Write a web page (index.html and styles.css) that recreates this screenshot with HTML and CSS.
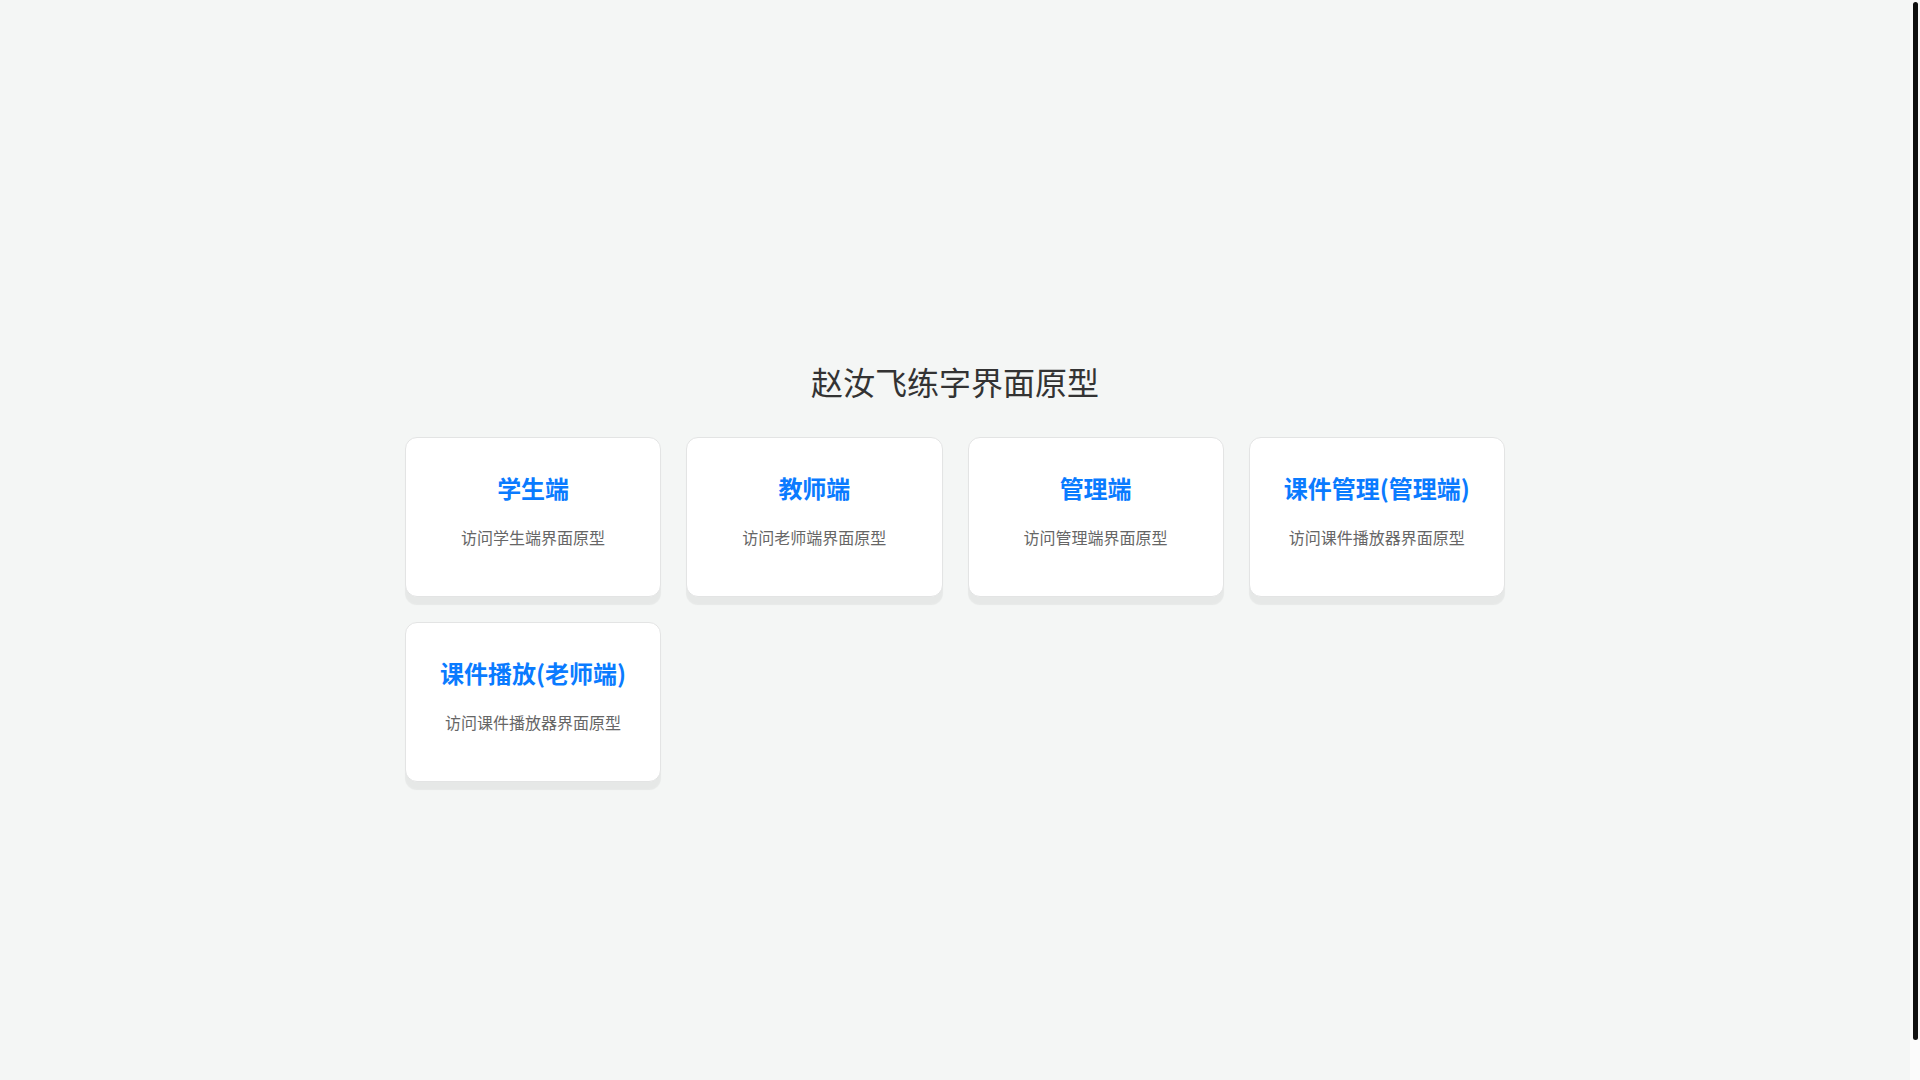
FILE: index.html
```html
<!DOCTYPE html>
<html lang="zh-CN">
<head>
<meta charset="utf-8">
<title>赵汝飞练字界面原型</title>
<link rel="stylesheet" href="styles.css">
</head>
<body>
<main class="page">
  <h1 class="page-title">赵汝飞练字界面原型</h1>
  <div class="card-grid">
    <a class="card" href="#"><h2 class="card-title">学生端</h2><p class="card-desc">访问学生端界面原型</p></a>
    <a class="card" href="#"><h2 class="card-title">教师端</h2><p class="card-desc">访问老师端界面原型</p></a>
    <a class="card" href="#"><h2 class="card-title">管理端</h2><p class="card-desc">访问管理端界面原型</p></a>
    <a class="card" href="#"><h2 class="card-title">课件管理(管理端)</h2><p class="card-desc">访问课件播放器界面原型</p></a>
    <a class="card" href="#"><h2 class="card-title">课件播放(老师端)</h2><p class="card-desc">访问课件播放器界面原型</p></a>
  </div>
</main>
<div class="scrollbar" aria-hidden="true"><div class="scrollbar-thumb"></div></div>
</body>
</html>
```
FILE: styles.css
```css
html, body {
  margin: 0;
  padding: 0;
}

html {
  overflow: hidden;
}

body {
  background: #f4f6f5;
  font-family: "Noto Sans CJK SC", "Noto Sans", sans-serif;
  color: #333333;
  padding-right: 10px;
}

.page {
  min-height: 100vh;
  padding: 20px 0;
  display: flex;
  flex-direction: column;
  justify-content: center;
  align-items: center;
}

.page-title {
  margin: 20px 0 33px;
  font-size: 32px;
  font-weight: 400;
  line-height: 46px;
  color: #333333;
  text-align: center;
}

.card-grid {
  width: 1100px;
  display: grid;
  grid-template-columns: repeat(4, 1fr);
  gap: 25px;
}

.card {
  box-sizing: border-box;
  height: 160px;
  padding: 33px 15px 0;
  background: #ffffff;
  border: 1px solid #e3e4e4;
  border-radius: 12px;
  box-shadow: 0 8px 1px rgba(0, 0, 0, 0.055);
  text-align: center;
  text-decoration: none;
  display: flex;
  flex-direction: column;
  align-items: center;
}

.card-title {
  margin: 0;
  font-size: 24px;
  font-weight: 700;
  line-height: 34px;
  color: #0a7bff;
  white-space: nowrap;
}

.card-desc {
  margin: 20px 0 0;
  font-size: 16px;
  line-height: 24px;
  color: #666666;
  white-space: nowrap;
}

.scrollbar {
  position: fixed;
  top: 0;
  right: 0;
  width: 10px;
  height: 100vh;
  background: #fbfbfb;
}

.scrollbar-thumb {
  margin: 2px 0 0 3px;
  width: 5px;
  height: 1038px;
  border-radius: 3px;
  background: #111111;
}
```
